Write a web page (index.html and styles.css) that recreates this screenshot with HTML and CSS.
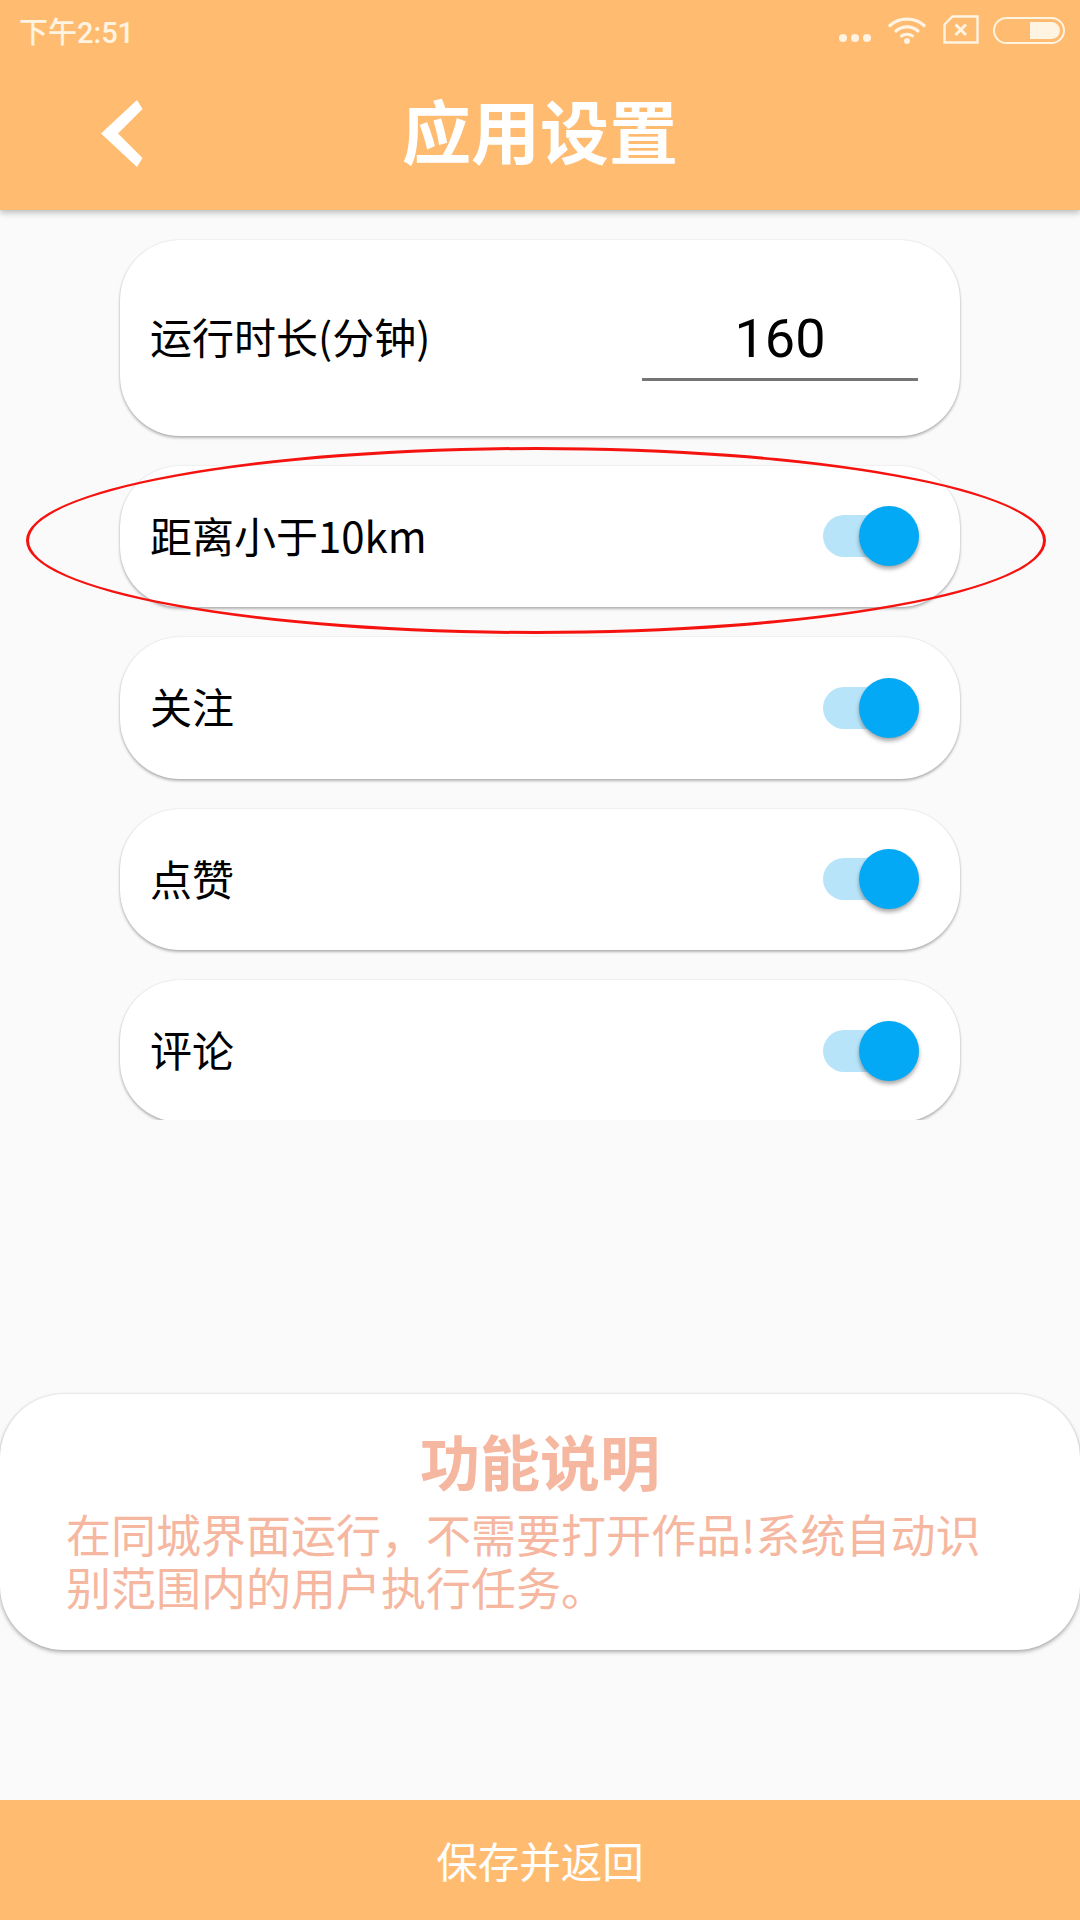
FILE: index.html
```html
<!DOCTYPE html>
<html lang="zh-CN">
<head>
  <meta charset="UTF-8">
  <meta name="viewport" content="width=device-width, initial-scale=1">
  <title>应用设置</title>
  <link rel="stylesheet" href="styles.css">
</head>
<body>
  <div class="page">
    <header class="topbar">
      <div class="statusbar">
        <span class="clock">下午2:51</span>
        <div class="status-icons">
          <span class="dots"><i></i><i></i><i></i></span>
          <!-- wifi -->
          <svg class="wifi" width="38" height="28" viewBox="0 0 38 28">
            <path d="M2 9.5C11 1 27 1 36 9.5" fill="none" stroke="currentColor" stroke-width="3.4" stroke-linecap="round"/>
            <path d="M8 15C14 9.5 24 9.5 30 15" fill="none" stroke="currentColor" stroke-width="3.2" stroke-linecap="round"/>
            <path d="M13.5 20C16.5 17.5 21.5 17.5 24.5 20" fill="none" stroke="currentColor" stroke-width="3" stroke-linecap="round"/>
            <circle cx="19" cy="25" r="3" fill="currentColor"/>
          </svg>
          <!-- no sim card -->
          <svg class="sim" width="36" height="29" viewBox="0 0 36 29">
            <path d="M1.5 9.5L9.5 1.5H34.5V27.5H1.5Z" fill="none" stroke="currentColor" stroke-width="2.4"/>
            <path d="M12.5 9.5L23 20M23 9.5L12.5 20" fill="none" stroke="currentColor" stroke-width="3"/>
          </svg>
          <!-- battery -->
          <span class="battery"><span class="battery-level"></span></span>
        </div>
      </div>
      <div class="navbar">
        <button class="back" type="button" aria-label="返回">
          <svg width="44" height="69" viewBox="0 0 44 69">
            <path d="M37 1L42.5 10L18 34.5L42.5 59L37 68L1 34.5Z" fill="#fff"/>
          </svg>
        </button>
        <h1>应用设置</h1>
      </div>
    </header>

    <main class="content">
      <div class="settings">
        <div class="row row-tall">
          <span class="row-label">运行时长(分钟)</span>
          <span class="number-field">160</span>
        </div>
        <div class="row">
          <span class="row-label">距离小于10km</span>
          <span class="switch"></span>
        </div>
        <div class="row">
          <span class="row-label">关注</span>
          <span class="switch"></span>
        </div>
        <div class="row">
          <span class="row-label">点赞</span>
          <span class="switch"></span>
        </div>
        <div class="row">
          <span class="row-label">评论</span>
          <span class="switch"></span>
        </div>
      </div>

      <section class="about">
        <h2>功能说明</h2>
        <p>在同城界面运行，不需要打开作品!系统自动识别范围内的用户执行任务。</p>
      </section>
    </main>

    <footer class="save-bar">保存并返回</footer>

    <!-- red marker ring around the distance row -->
    <div class="marker"></div>
  </div>
</body>
</html>
```

FILE: styles.css
```css
* {
  box-sizing: border-box;
}
body {
  margin: 0;
  font-family: "Noto Sans CJK SC", "Noto Sans", sans-serif;
}
.page {
  position: relative;
  display: flex;
  flex-direction: column;
  width: 1080px;
  height: 1920px;
  overflow: hidden;
  background: #fafafa;
}

/* top bar */
.topbar {
  position: relative;
  z-index: 1;
  flex: none;
  height: 210px;
  background: #ffbc71;
  box-shadow: 0 3px 6px rgba(0,0,0,0.24);
}
.statusbar {
  display: flex;
  justify-content: space-between;
  align-items: center;
  height: 60px;
  padding: 0 15px 0 19px;
  color: #fff3e2;
}
.clock {
  font-family: "Roboto", "Noto Sans CJK SC", sans-serif;
  font-size: 29px;
  font-weight: 500;
  color: #fff3e2;
}
.status-icons {
  display: flex;
  align-items: flex-end;
  margin-top: -2px;
}
.dots {
  display: flex;
  gap: 4px;
  margin: 0 17px 0 4px;
  padding-bottom: 2px;
}
.dots i {
  width: 8px;
  height: 8px;
  border-radius: 50%;
  background: currentColor;
}
.wifi {
  margin-right: 17px;
}
.sim {
  margin-right: 14px;
}
.battery {
  display: flex;
  justify-content: flex-end;
  width: 72px;
  height: 27px;
  padding: 3px;
  border: 2px solid currentColor;
  border-radius: 14px;
}
.battery-level {
  width: 30px;
  background: currentColor;
  border-radius: 0 9px 9px 0;
}
.navbar {
  position: relative;
  display: flex;
  justify-content: center;
  align-items: center;
  height: 150px;
  padding-bottom: 12px;
}
.navbar h1 {
  margin: 0;
  color: #fff;
  font-size: 69px;
  font-weight: 700;
  line-height: 1;
}
.back {
  position: absolute;
  left: 100px;
  top: 39px;
  padding: 0;
  border: none;
  background: none;
  line-height: 0;
}

/* settings list */
.content {
  flex: 1;
}
.settings {
  display: flex;
  flex-direction: column;
  gap: 30px;
  height: 910px;
  padding: 30px 120px 0;
  overflow: hidden;
}
.row {
  flex: none;
  display: flex;
  justify-content: space-between;
  align-items: center;
  height: 141.5px;
  padding: 0 41px 0 30px;
  background: #fff;
  border-radius: 60px;
  box-shadow: 0 2px 3px rgba(0,0,0,0.28), 0 0 2px rgba(0,0,0,0.12);
}
.row-tall {
  height: 195.5px;
  padding-right: 42px;
}
.row-label {
  position: relative;
  top: -2px;
  font-size: 42px;
  color: #000;
}
.number-field {
  width: 276px;
  margin-top: 14px;
  padding-bottom: 8px;
  border-bottom: 3px solid #757575;
  text-align: center;
  font-family: "Roboto", sans-serif;
  font-size: 54px;
  line-height: 62px;
  color: #000;
}
.switch {
  position: relative;
  width: 96px;
  height: 42px;
  background: #b8e4fa;
  border-radius: 21px;
}
.switch::after {
  content: "";
  position: absolute;
  top: -9px;
  right: 0;
  width: 60px;
  height: 60px;
  background: #03a9f4;
  border-radius: 50%;
  box-shadow: 0 3px 4px rgba(0,0,0,0.35);
}

/* description card */
.about {
  height: 256px;
  margin-top: 274px;
  padding: 30px 66px 0;
  background: #fff;
  border-radius: 64px;
  box-shadow: 0 2px 4px rgba(0,0,0,0.32), 0 0 2px rgba(0,0,0,0.1);
  color: #f6b7a1;
}
.about h2 {
  margin: 0;
  text-align: center;
  font-size: 60px;
  font-weight: 700;
  line-height: 72px;
}
.about p {
  margin: 11px 0 0;
  font-size: 45px;
  line-height: 53px;
}

/* bottom action */
.save-bar {
  flex: none;
  display: flex;
  justify-content: center;
  align-items: center;
  height: 120px;
  background: #ffbc71;
  color: #fff;
  font-size: 41.5px;
}

.marker {
  position: absolute;
  left: 26px;
  top: 447px;
  width: 1020px;
  height: 187px;
  border: 3.5px solid #f5130f;
  border-radius: 50%;
}
```
